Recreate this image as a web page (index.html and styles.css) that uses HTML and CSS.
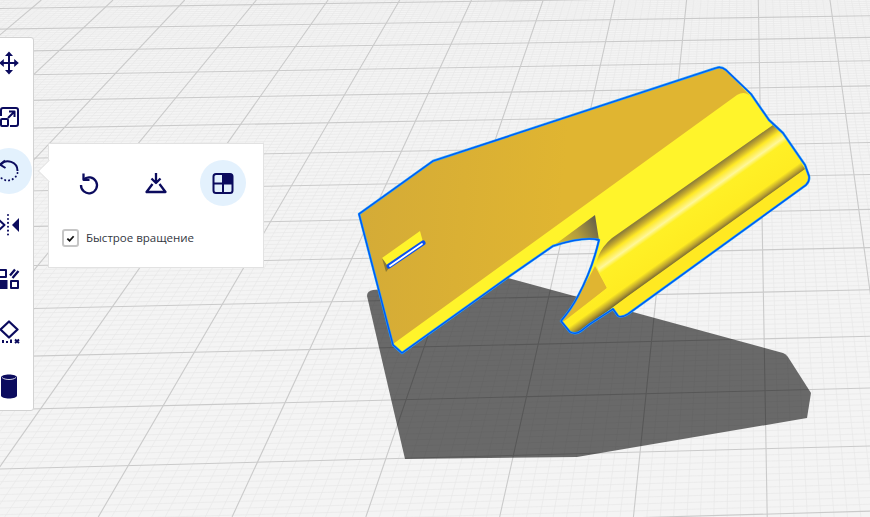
FILE: index.html
```html
<!DOCTYPE html>
<html lang="ru">
<head>
<meta charset="utf-8">
<title>Быстрое вращение</title>
<link rel="stylesheet" href="styles.css">
</head>
<body>
<main class="stage">
  <svg class="scene" viewBox="0 0 870 517" width="870" height="517" aria-hidden="true">
    <defs>
      <linearGradient id="face" gradientUnits="userSpaceOnUse" x1="360" y1="214" x2="560" y2="230">
        <stop offset="0" stop-color="#d4ab37"/>
        <stop offset="1" stop-color="#e0b531"/>
      </linearGradient>
      <linearGradient id="notch" gradientUnits="userSpaceOnUse" x1="555" y1="246" x2="600" y2="222">
        <stop offset="0" stop-color="#dfc02c"/>
        <stop offset=".5" stop-color="#b39c3c"/>
        <stop offset="1" stop-color="#5e5a4c"/>
      </linearGradient>
      <linearGradient id="barrel" gradientUnits="userSpaceOnUse" x1="773" y1="125" x2="805" y2="170">
        <stop offset="0" stop-color="#8f7f38"/>
        <stop offset=".08" stop-color="#c4a92f"/>
        <stop offset=".17" stop-color="#ffe925"/>
        <stop offset=".3" stop-color="#fff79a"/>
        <stop offset=".38" stop-color="#fff026"/>
        <stop offset=".84" stop-color="#ffec22"/>
        <stop offset=".94" stop-color="#b89f2f"/>
        <stop offset="1" stop-color="#7a6b30"/>
      </linearGradient>
    </defs>
    <rect class="floor" width="870" height="517"/>
    <g id="grid"></g>
    <path class="shadow" d="M373 290Q367 291 367 296L405 459L577 457L807 418L811 393L788 357Q786 354 783 353L508 278L440 284Z"/>
    <path class="bright" d="M359 214L433 161L716 68Q721 66 726 70L751 94L769 120L783 133L805 165L809 176Q810 181 806 185L628 314Q622 318 618 316L613 309L590 324L581 331Q576 335 570 332L561 321Q572 308 578 296Q592 270 599 240Q584 236 553 246L507 278L402 353L393 345Z"/>
    <path class="face" d="M359 214L433 161L716 68Q721 66 726 70L751 97Q745 90 737 95L393 344Z"/>
    <path class="notch" d="M553 246L595 215L599 240Q584 236 553 246Z"/>
    <path class="face" d="M561 321Q572 308 578 296Q590 276 595 266L607 288L565 322Z"/>
    <path class="flange" d="M805 167L809 176Q810 181 806 185L628 314Q622 318 618 316L612 309L628 295Z"/>
    <path class="barrel" d="M773 125L612 238Q598 250 596 265L607 288L563 322L570 332Q576 335 581 331L628 296L805 169L783 133Z"/>
    <path class="wedge" d="M382 258L420 231L423 242L389 268Z"/>
    <path class="wedge-side" d="M382 258L389 268L386 272Z"/>
    <path class="edge-halo" d="M359 214L433 161L716 68Q721 66 726 70L751 94L769 120L783 133L805 165L809 176Q810 181 806 185L628 314Q622 318 618 316L613 309L590 324L581 331Q576 335 570 332L561 321Q572 308 578 296Q592 270 599 240Q584 236 553 246L507 278L402 353L393 345Z"/>
    <path class="edge-core" d="M359 214L433 161L716 68Q721 66 726 70L751 94L769 120L783 133L805 165L809 176Q810 181 806 185L628 314Q622 318 618 316L613 309L590 324L581 331Q576 335 570 332L561 321Q572 308 578 296Q592 270 599 240Q584 236 553 246L507 278L402 353L393 345Z"/>
    <path class="slot-edge" d="M389 266L423 243"/>
    <path class="slot-gap" d="M390 266L422 244"/>
  </svg>

  <nav class="toolbar">
    <button class="tool" type="button" aria-label="Перемещение">
      <svg class="icon" viewBox="0 0 24 24"><path class="ln" d="M12 4V20M4 12H20"/><path class="fl" d="M12 .5L16 5H8ZM12 23.500L8 19H16ZM2.200 12L6.800 8V16ZM21.800 12L17.200 16V8Z"/></svg>
    </button>
    <button class="tool" type="button" aria-label="Масштаб">
      <svg class="icon" viewBox="0 0 24 24"><path class="ln" d="M4 11V5a2 2 0 0 1 2-2h13a2 2 0 0 1 2 2v14a2 2 0 0 1-2 2h-6"/><rect class="ln" x="4" y="14" width="7" height="7" rx="1"/><path class="ln" d="M11 13L17 7M12 6.500H17.500V12"/></svg>
    </button>
    <button class="tool tool-on" type="button" aria-label="Вращение">
      <svg class="icon" viewBox="0 0 24 24"><path class="ln" d="M3.500 6A9.500 9.500 0 0 1 20.500 12"/><path class="ln" d="M8 1.500L3 5.500L8.500 9"/><path class="dots" d="M20.500 14A10 10 0 0 1 2.500 17"/></svg>
    </button>
    <button class="tool" type="button" aria-label="Зеркало">
      <svg class="icon" viewBox="0 0 24 24"><path class="dots" d="M11 2V23"/><path class="fl" d="M15 12L22 5V19Z"/><path class="ln" d="M7.500 12L1 6V18Z"/></svg>
    </button>
    <button class="tool" type="button" aria-label="Расположение">
      <svg class="icon" viewBox="0 0 24 24"><rect class="ln" x="2" y="3" width="7" height="7"/><path class="ln heavy" d="M13 8.500L18 2.500M15.500 11L21.500 4"/><rect class="fl" x="1" y="13" width="9.500" height="9"/><rect class="ln" x="14" y="14" width="7" height="7"/></svg>
    </button>
    <button class="tool" type="button" aria-label="Опоры">
      <svg class="icon" viewBox="0 0 24 24"><path class="ln heavy" d="M12 .5L20.500 8.500L12 16.500L3.500 8.500Z"/><path class="fl" d="M5 19h2v3H5ZM9 20h2v2H9ZM13 18.500h2v3.500h-2Z"/><path class="ln" d="M18 18.500L22 22M22 18.500L18 22"/></svg>
    </button>
    <button class="tool" type="button" aria-label="Цилиндр">
      <svg class="icon" viewBox="0 0 24 24"><path class="fl" d="M4 2.500C4 .5 8 -.5 12 -.5S20 .5 20 2.500V20.500C20 22.500 16 23.500 12 23.500S4 22.500 4 20.500Z"/><path class="rim" d="M5 2.500C6.500 4 9.500 4.500 12 4.500S17.500 4 19 2.500"/></svg>
    </button>
  </nav>

  <section class="popover">
    <div class="pop-tools">
      <button class="tool" type="button" aria-label="Сброс">
        <svg class="icon" viewBox="0 0 24 24"><path class="ln heavy" d="M6.500 8.500A8 8 0 1 1 4 14"/><path class="ln heavy" d="M6.500 2.500V8.800H12.500"/></svg>
      </button>
      <button class="tool" type="button" aria-label="На стол">
        <svg class="icon" viewBox="0 0 24 24"><path class="ln heavy" d="M12 2V12M7.500 7.500L12 12L16.500 7.500"/><path class="ln heavy" d="M8.500 13L2.500 21H21.500L15.500 13"/></svg>
      </button>
      <button class="tool tool-on" type="button" aria-label="Автоповорот">
        <svg class="icon" viewBox="0 0 24 24"><path class="fl" d="M12 3H19a2.500 2.500 0 0 1 2.500 2.500V12H12Z"/><rect class="ln" x="2.500" y="3" width="19" height="19" rx="2.500"/><path class="ln" d="M12 3V22M2.500 12.500H21.500"/></svg>
      </button>
    </div>
    <label class="check-row">
      <span class="check"><svg class="tick" viewBox="0 0 10 10"><path d="M1.500 5.200L4 7.500L8.500 2.500"/></svg></span>
      <span class="check-label">Быстрое вращение</span>
    </label>
  </section>
</main>
<script src="grid.js"></script>
</body>
</html>
```
FILE: styles.css
```css
* { box-sizing: border-box; }
html, body { margin: 0; padding: 0; }
body { width: 870px; height: 517px; overflow: hidden; background: #f3f3f3; }

.stage { position: relative; width: 870px; height: 517px; overflow: hidden; font-family: "Open Sans", "Noto Sans", sans-serif; }
.scene { position: absolute; inset: 0; display: block; }

.floor { fill: #f4f4f4; }
.minor { stroke: #e8e8e8; stroke-width: .7; }
.major { stroke: #cacaca; stroke-width: 1.1; }
.shadow { fill: rgba(0, 0, 0, .57); }
.bright { fill: #fff42b; }
.face { fill: url(#face); }
.notch { fill: url(#notch); }
.barrel { fill: url(#barrel); }
.flange { fill: #ffe922; }
.wedge { fill: #fff42b; }
.wedge-side { fill: #8c7a35; }
.edge-halo { fill: none; stroke: #22a0ff; stroke-width: 2.4; stroke-linejoin: round; }
.edge-core { fill: none; stroke: #0058f0; stroke-width: 1.3; stroke-linejoin: round; }
.slot-edge { fill: none; stroke: #0a50f0; stroke-width: 5; stroke-linecap: round; }
.slot-gap { fill: none; stroke: #fff; stroke-width: 1.8; stroke-linecap: round; }

.toolbar { position: absolute; left: -16px; top: 37px; width: 50px; height: 374px; padding: 2px 0 1px; display: flex; flex-direction: column; align-items: center; gap: 8px; background: #fff; border: 1px solid #d2d2d2; border-radius: 3px; }
.tool { width: 46px; height: 46px; flex: none; padding: 0; display: flex; align-items: center; justify-content: center; background: transparent; border: 0; border-radius: 50%; }
.tool-on { background: #e3f1fd; }
.icon { width: 24px; height: 24px; display: block; overflow: visible; }
.ln { fill: none; stroke: #0b0b5e; stroke-width: 2; stroke-linejoin: round; }
.heavy { stroke-width: 2.300; }
.fl { fill: #0b0b5e; }
.dots { fill: none; stroke: #0b0b5e; stroke-width: 2; stroke-linecap: round; stroke-dasharray: .1 3.800; }
.rim { fill: none; stroke: #d5d5e6; stroke-width: 1; }

.popover { position: absolute; left: 48px; top: 143px; width: 216px; height: 125px; padding: 16px 13px; display: flex; flex-direction: column; gap: 23px; background: #fff; border: 1px solid #e2e2e2; }
.popover::before { content: ""; position: absolute; left: -8px; top: 19px; width: 15px; height: 15px; background: #fff; border-left: 1px solid #e2e2e2; border-bottom: 1px solid #e2e2e2; transform: rotate(45deg); }
.pop-tools { display: flex; gap: 21px; padding-left: 4px; }
.check-row { display: flex; align-items: center; gap: 7px; }
.check { width: 17px; height: 18px; display: flex; align-items: center; justify-content: center; background: #fff; border: 2px solid #c6c6c6; border-radius: 3px; }
.tick { width: 9px; height: 9px; display: block; }
.tick path { fill: none; stroke: #111; stroke-width: 2; }
.check-label { font-size: 11.500px; line-height: 18px; color: #33373f; }
```
FILE: grid.js
```js
// Draws the perspective build-plate grid from its two vanishing points.
(function () {
  var NS = "http://www.w3.org/2000/svg";
  var root = document.getElementById("grid");
  var VX = 748, VY = -597;          // depth lines converge here
  var HX = 40000, HY = -590;        // cross lines converge here
  var X0 = 113, XSTEP = 71.7;       // major spacing along y = 0
  var Y_A = 0.001671, Y_B = 0.0000559;

  function line(x1, y1, x2, y2, cls) {
    var l = document.createElementNS(NS, "line");
    l.setAttribute("x1", x1.toFixed(2));
    l.setAttribute("y1", y1.toFixed(2));
    l.setAttribute("x2", x2.toFixed(2));
    l.setAttribute("y2", y2.toFixed(2));
    l.setAttribute("class", cls);
    return l;
  }
  function depth(i) {
    var x = X0 + XSTEP * i / 10;
    var s = (x - VX) / (0 - VY);
    return line(x, 0, x + s * 517, 517, i % 10 === 0 ? "major" : "minor");
  }
  function cross(i) {
    var y = 1 / (Y_A - Y_B * i / 10) + HY;
    var s = (HY - y) / HX;
    return line(0, y, 870, y + s * 870, i % 10 === 0 ? "major" : "minor");
  }
  var i, majors = [];
  function add(l, isMajor) {
    if (isMajor) { majors.push(l); } else { root.appendChild(l); }
  }
  for (i = -20; i <= 110; i++) { add(depth(i), i % 10 === 0); }
  for (i = -10; i <= 140; i++) { add(cross(i), i % 10 === 0); }
  majors.forEach(function (l) { root.appendChild(l); });
})();
```
